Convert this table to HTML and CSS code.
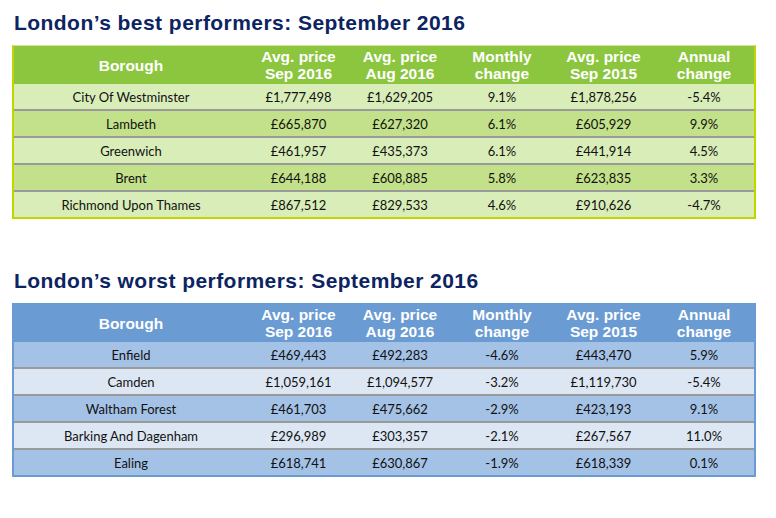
FILE: index.html
```html
<!DOCTYPE html>
<html>
<head>
<meta charset="utf-8">
<link rel="stylesheet" href="styles.css">
</head>
<body>
<section class="block block-best">
  <h2 class="title">London’s best performers: September 2016</h2>
  <div class="frame frame-green">
    <table class="data">
      <colgroup>
        <col class="c1"><col class="c2"><col class="c3"><col class="c4"><col class="c5"><col class="c6">
      </colgroup>
      <thead>
        <tr><th>Borough</th><th>Avg. price<br>Sep 2016</th><th>Avg. price<br>Aug 2016</th><th>Monthly<br>change</th><th>Avg. price<br>Sep 2015</th><th>Annual<br>change</th></tr>
      </thead>
      <tbody>
        <tr><td>City Of Westminster</td><td>£1,777,498</td><td>£1,629,205</td><td>9.1%</td><td>£1,878,256</td><td>-5.4%</td></tr>
        <tr><td>Lambeth</td><td>£665,870</td><td>£627,320</td><td>6.1%</td><td>£605,929</td><td>9.9%</td></tr>
        <tr><td>Greenwich</td><td>£461,957</td><td>£435,373</td><td>6.1%</td><td>£441,914</td><td>4.5%</td></tr>
        <tr><td>Brent</td><td>£644,188</td><td>£608,885</td><td>5.8%</td><td>£623,835</td><td>3.3%</td></tr>
        <tr><td>Richmond Upon Thames</td><td>£867,512</td><td>£829,533</td><td>4.6%</td><td>£910,626</td><td>-4.7%</td></tr>
      </tbody>
    </table>
  </div>
</section>
<section class="block block-worst">
  <h2 class="title">London’s worst performers: September 2016</h2>
  <div class="frame frame-blue">
    <table class="data">
      <colgroup>
        <col class="c1"><col class="c2"><col class="c3"><col class="c4"><col class="c5"><col class="c6">
      </colgroup>
      <thead>
        <tr><th>Borough</th><th>Avg. price<br>Sep 2016</th><th>Avg. price<br>Aug 2016</th><th>Monthly<br>change</th><th>Avg. price<br>Sep 2015</th><th>Annual<br>change</th></tr>
      </thead>
      <tbody>
        <tr><td>Enfield</td><td>£469,443</td><td>£492,283</td><td>-4.6%</td><td>£443,470</td><td>5.9%</td></tr>
        <tr><td>Camden</td><td>£1,059,161</td><td>£1,094,577</td><td>-3.2%</td><td>£1,119,730</td><td>-5.4%</td></tr>
        <tr><td>Waltham Forest</td><td>£461,703</td><td>£475,662</td><td>-2.9%</td><td>£423,193</td><td>9.1%</td></tr>
        <tr><td>Barking And Dagenham</td><td>£296,989</td><td>£303,357</td><td>-2.1%</td><td>£267,567</td><td>11.0%</td></tr>
        <tr><td>Ealing</td><td>£618,741</td><td>£630,867</td><td>-1.9%</td><td>£618,339</td><td>0.1%</td></tr>
      </tbody>
    </table>
  </div>
</section>
</body>
</html>
```

FILE: styles.css
```css
html, body {
  margin: 0;
  padding: 0;
  background: #ffffff;
}
body {
  padding: 11px 20px 0 12px;
}
.block {
  display: flex;
  flex-direction: column;
}
.block-worst {
  margin-top: 50px;
}
.title {
  margin: 0 0 10px 2px;
  font-family: "Liberation Sans", Arial, sans-serif;
  font-weight: bold;
  font-size: 21px;
  line-height: 24px;
  color: #0c2461;
  letter-spacing: 0.45px;
}
.frame {
  width: 740px;
  border-style: solid;
  border-width: 1px 2px 2px 2px;
}
.frame-green {
  border-color: #d2e39a #c2d500 #c2d500 #c2d500;
}
.frame-blue {
  border-color: #6a9bd3;
}
.data {
  width: 740px;
  border-collapse: collapse;
  table-layout: fixed;
}
.c1 { width: 234px; }
.c2 { width: 101px; }
.c3 { width: 102px; }
.c4 { width: 102px; }
.c5 { width: 101px; }
.c6 { width: 100px; }
.data th {
  height: 38px;
  padding: 0;
  font-family: "Liberation Sans", Arial, sans-serif;
  font-weight: bold;
  font-size: 15.5px;
  line-height: 17px;
  color: #ffffff;
  text-align: center;
  vertical-align: middle;
}
.data td {
  height: 25px;
  padding: 0;
  font-family: Lato, "Liberation Sans", sans-serif;
  font-size: 13px;
  line-height: 16px;
  color: #111111;
  text-align: center;
  vertical-align: middle;
  border-top: 2px solid #9a9a9a;
}
.data tbody tr:first-child td {
  border-top: 0;
  height: 25px;
}
.frame-green th { background: #8cc63f; }
.frame-green tbody tr:nth-child(odd) td { background: #d9edb8; }
.frame-green tbody tr:nth-child(even) td { background: #c3e18a; }
.frame-blue th { background: #6a9bd3; }
.frame-blue tbody tr:nth-child(odd) td { background: #a4c2e6; }
.frame-blue tbody tr:nth-child(even) td { background: #dde7f3; }
```
